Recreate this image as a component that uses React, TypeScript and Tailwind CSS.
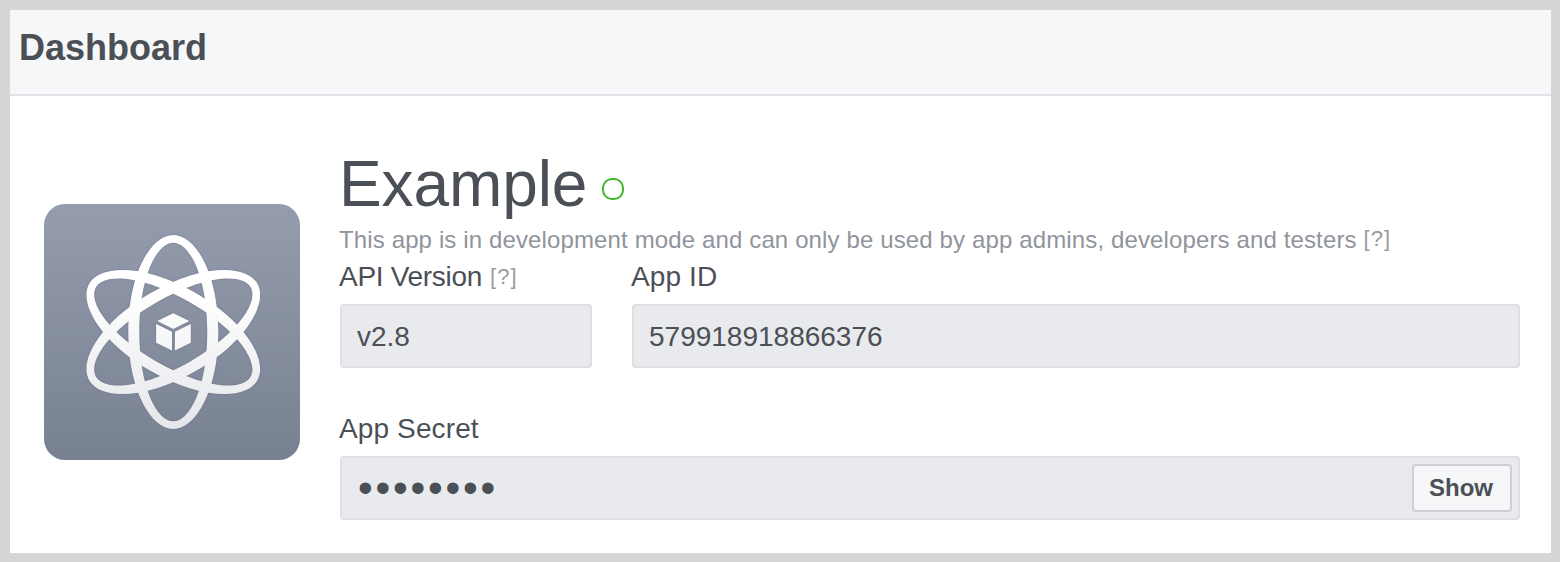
import type { ReactNode } from "react";

function AtomIcon() {
  const orbit =
    "M129.3 31c22.5 0 45 39 45 97s-22.5 97-45 97s-45-39-45-97s22.5-97 45-97z M129.3 38.7c17 0 34 35.3 34 89.3s-17 89.3-34 89.3s-34-35.3-34-89.3s17-89.3 34-89.3z";
  return (
    <svg viewBox="0 0 256 256" className="size-64 shrink-0" aria-hidden="true">
      <defs>
        <linearGradient id="tile" x1="0" y1="0" x2="0" y2="1">
          <stop offset="0" stopColor="#949cae" />
          <stop offset="1" stopColor="#788191" />
        </linearGradient>
        <linearGradient id="ink" gradientUnits="userSpaceOnUse" x1="0" y1="31" x2="0" y2="225">
          <stop offset="0.3" stopColor="#ffffff" />
          <stop offset="1" stopColor="#e5e6ea" />
        </linearGradient>
        <mask id="orbits" maskUnits="userSpaceOnUse" x="0" y="0" width="256" height="256">
          <g fill="#fff" fillRule="evenodd">
            <path d={orbit} />
            <path d={orbit} transform="rotate(60 129.3 128)" />
            <path d={orbit} transform="rotate(-60 129.3 128)" />
          </g>
          <g fill="#fff">
            <path d="M129.3 109.3L113.3 116.9L129.3 125L145.3 116.9Z" />
            <path d="M112.1 120L128 127.8V146.6L112.1 138.8Z" />
            <path d="M146.8 120L130.9 127.8V146.6L146.8 138.8Z" />
          </g>
        </mask>
      </defs>
      <rect width="256" height="256" rx="21" fill="url(#tile)" />
      <g className="drop-shadow-[0_0_1px_rgba(80,90,115,0.35)]">
        <rect width="256" height="256" fill="url(#ink)" mask="url(#orbits)" />
      </g>
    </svg>
  );
}

function Help() {
  return <span className="relative -top-0.5 text-[22px] tracking-[1.1px] text-[#9c9c9c]">[?]</span>;
}

function Label({ children }: { children: ReactNode }) {
  return (
    <div className="-ml-px h-[46px] pt-px text-[28px] leading-9 tracking-[0.12px] whitespace-nowrap">{children}</div>
  );
}

function Value({ children }: { children: ReactNode }) {
  return (
    <div className="flex h-16 items-center rounded-[4px] border-2 border-[#dddfe2] bg-[#e9eaed] pr-1.5 pl-[15px] text-[28px]">
      {children}
    </div>
  );
}

export default function App() {
  return (
    <div className="h-[562px] w-[1560px] bg-[#d6d6d6] pt-2.5 pr-[9px] pb-[9px] pl-2.5 font-['Liberation_Sans',Arial,sans-serif] text-[#4b4f56]">
      <div className="flex h-full flex-col bg-white">
        <header className="h-[86px] border-b-2 border-[#e0e2e6] bg-[#f6f7f9] pt-4 pl-[9px]">
          <h1 className="text-[36px] leading-[44px] font-bold">Dashboard</h1>
        </header>
        <main className="flex pr-[31px] pl-[34px]">
          <div className="mt-[108px] mr-10 shrink-0">
            <AtomIcon />
          </div>
          <section className="grow pt-[52px]">
            <div className="flex h-[74px] items-start">
              <h2 className="-ml-px text-[64px] leading-[72px] tracking-[-0.1px]">Example</h2>
              <span className="mt-[30px] ml-[15px] size-[22px] rounded-[10px] border-2 border-[#42b72a]" />
            </div>
            <p className="-ml-px h-9 text-[24px] leading-9 tracking-[0.13px] whitespace-nowrap text-[#90949c]">
              This app is in development mode and can only be used by app admins, developers and testers{" "}
              <Help />
            </p>
            <div className="flex gap-10">
              <div className="w-[252px]">
                <Label>
                  <span className="tracking-[-0.3px]">API Version</span> <Help />
                </Label>
                <Value>
                  <span className="pt-0.5">v2.8</span>
                </Value>
              </div>
              <div className="grow">
                <Label>App ID</Label>
                <Value>
                  <span className="pt-0.5">579918918866376</span>
                </Value>
              </div>
            </div>
            <div className="mt-[42px]">
              <Label>App Secret</Label>
              <Value>
                <span className="grow pb-px pl-px text-[42px] leading-[59px] tracking-[2.8px]">••••••••</span>
                <button className="h-12 w-[100px] rounded-[4px] border-2 border-[#ced0d4] bg-[#f6f7f9] pr-0.5 text-[24px] font-bold">
                  Show
                </button>
              </Value>
            </div>
          </section>
        </main>
      </div>
    </div>
  );
}
